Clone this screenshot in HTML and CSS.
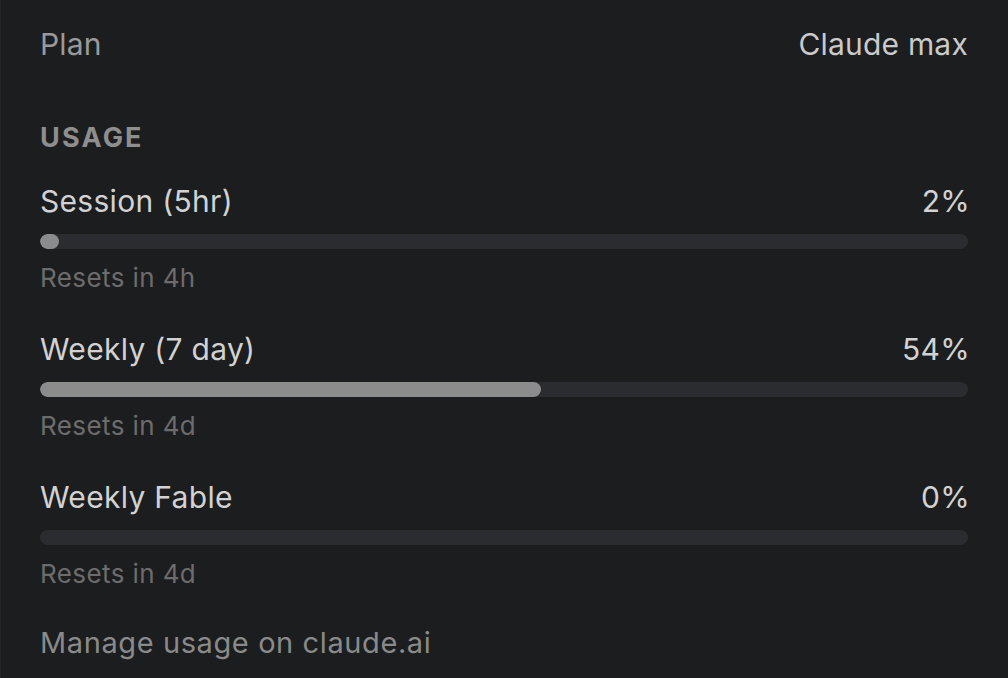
FILE: index.html
```html
<!DOCTYPE html>
<html lang="en">
<head>
  <meta charset="UTF-8">
  <title>Usage</title>
  <link rel="stylesheet" href="styles.css">
</head>
<body>
  <div class="panel">
    <!-- Plan -->
    <div class="row plan">
      <span class="plan-label">Plan</span>
      <span class="plan-value">Claude max</span>
    </div>

    <h3 class="section-title">USAGE</h3>

    <div class="usage">
      <div class="row usage-head">
        <span>Session (5hr)</span>
        <span class="pct">2%</span>
      </div>
      <div class="bar"><div class="bar-fill" style="width: 2%"></div></div>
      <div class="resets">Resets in 4h</div>
    </div>

    <div class="usage">
      <div class="row usage-head">
        <span>Weekly (7 day)</span>
        <span class="pct">54%</span>
      </div>
      <div class="bar"><div class="bar-fill" style="width: 54%"></div></div>
      <div class="resets">Resets in 4d</div>
    </div>

    <div class="usage">
      <div class="row usage-head">
        <span>Weekly Fable</span>
        <span class="pct">0%</span>
      </div>
      <div class="bar"><div class="bar-fill empty" style="width: 0%"></div></div>
      <div class="resets">Resets in 4d</div>
    </div>

    <a class="manage" href="#">Manage usage on claude.ai</a>
  </div>
</body>
</html>
```

FILE: styles.css
```css
html, body {
  margin: 0;
  padding: 0;
  height: 100%;
}

body {
  font-family: Inter, "Noto Sans", sans-serif;
  background-color: #1c1d1f;
  color: #d0d0d0;
}

.panel {
  box-sizing: border-box;
  min-height: 100%;
  padding: 26px 40px 0 39px;
  border-left: 1px solid #25262a;
}

.row {
  display: flex;
  justify-content: space-between;
  align-items: baseline;
}

.plan {
  font-size: 30px;
  line-height: 36px;
  letter-spacing: 0.2px;
}

.plan-label {
  color: #9a9a9a;
}

.plan-value {
  color: #cacaca;
}

.section-title {
  margin: 60px 0 0 0;
  font-size: 27px;
  line-height: 32px;
  font-weight: 700;
  letter-spacing: 2.2px;
  color: #8e8e8e;
}

.usage {
  margin-top: 29px;
}

.usage + .usage {
  margin-top: 37px;
}

.usage-head {
  font-size: 30px;
  line-height: 36px;
  letter-spacing: 0.3px;
  color: #d2d2d2;
}

.pct {
  margin-right: -2px;
}

.bar {
  margin-top: 15px;
  height: 15px;
  border-radius: 8px;
  background-color: #2b2c2f;
  overflow: hidden;
}

.bar-fill {
  height: 100%;
  min-width: 19px;
  border-radius: 8px;
  background-color: #8c8c8c;
}

.bar-fill.empty {
  min-width: 0;
}

.resets {
  margin-top: 13px;
  font-size: 26px;
  line-height: 32px;
  letter-spacing: 0.4px;
  color: #6c6c6c;
}

.manage {
  display: block;
  margin-top: 35px;
  font-size: 29px;
  line-height: 36px;
  letter-spacing: 0.6px;
  color: #8a8a8a;
  text-decoration: none;
}
```
